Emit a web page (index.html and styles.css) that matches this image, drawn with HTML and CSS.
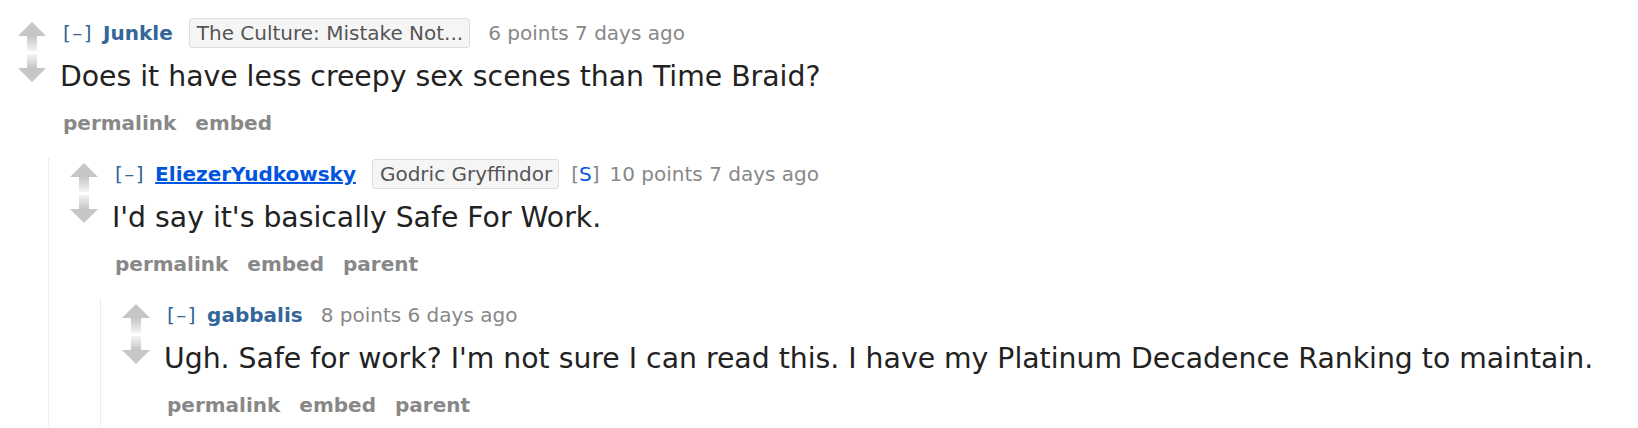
FILE: index.html
```html
<!DOCTYPE html>
<html>
<head>
<meta charset="utf-8">
<link rel="stylesheet" href="styles.css">
</head>
<body>
<div class="thread">
  <div class="comment top">
    <div class="row">
      <div class="midcol">
        <svg class="arrows" width="28" height="62" viewBox="0 0 28 62">
          <defs>
            <linearGradient id="fu" x1="0" y1="0" x2="0" y2="1">
              <stop offset="0" stop-color="#c6c6c6"/>
              <stop offset="1" stop-color="#c6c6c6" stop-opacity="0.2"/>
            </linearGradient>
            <linearGradient id="fd" x1="0" y1="1" x2="0" y2="0">
              <stop offset="0" stop-color="#c6c6c6"/>
              <stop offset="1" stop-color="#c6c6c6" stop-opacity="0.2"/>
            </linearGradient>
          </defs>
          <polygon points="14,0 28,14 0,14" fill="#c6c6c6"/>
          <rect x="9" y="14" width="10" height="15" fill="url(#fu)"/>
          <rect x="9" y="32" width="10" height="14" fill="url(#fd)"/>
          <polygon points="0,46 28,46 14,60" fill="#c6c6c6"/>
        </svg>
      </div>
      <div class="entry">
        <p class="tagline"><span class="expand">[–]</span><a class="author">Junkle</a><span class="flair">The Culture: Mistake Not...</span><span class="score">6 points 7 days ago</span></p>
        <div class="usertext">Does it have less creepy sex scenes than Time Braid?</div>
        <ul class="buttons"><li>permalink</li><li>embed</li></ul>
      </div>
    </div>
    <div class="child">
      <div class="comment">
        <div class="row">
          <div class="midcol">
            <svg class="arrows" width="28" height="62" viewBox="0 0 28 62">
              <polygon points="14,0 28,14 0,14" fill="#c6c6c6"/>
              <rect x="9" y="14" width="10" height="15" fill="url(#fu)"/>
              <rect x="9" y="32" width="10" height="14" fill="url(#fd)"/>
              <polygon points="0,46 28,46 14,60" fill="#c6c6c6"/>
            </svg>
          </div>
          <div class="entry">
            <p class="tagline"><span class="expand">[–]</span><a class="author submitter">EliezerYudkowsky</a><span class="flair">Godric Gryffindor</span><span class="userattrs">[<a class="s">S</a>]</span><span class="score">10 points 7 days ago</span></p>
            <div class="usertext">I'd say it's basically Safe For Work.</div>
            <ul class="buttons"><li>permalink</li><li>embed</li><li>parent</li></ul>
          </div>
        </div>
        <div class="child">
          <div class="comment last">
            <div class="row">
              <div class="midcol">
                <svg class="arrows" width="28" height="62" viewBox="0 0 28 62">
                  <polygon points="14,0 28,14 0,14" fill="#c6c6c6"/>
                  <rect x="9" y="14" width="10" height="15" fill="url(#fu)"/>
                  <rect x="9" y="32" width="10" height="14" fill="url(#fd)"/>
                  <polygon points="0,46 28,46 14,60" fill="#c6c6c6"/>
                </svg>
              </div>
              <div class="entry">
                <p class="tagline"><span class="expand">[–]</span><a class="author">gabbalis</a><span class="score">8 points 6 days ago</span></p>
                <div class="usertext">Ugh. Safe for work? I'm not sure I can read this. I have my Platinum Decadence Ranking to maintain.</div>
                <ul class="buttons"><li>permalink</li><li>embed</li><li>parent</li></ul>
              </div>
            </div>
          </div>
        </div>
      </div>
    </div>
  </div>
</div>
</body>
</html>
```

FILE: styles.css
```css
html, body {
  margin: 0;
  padding: 0;
  background: #ffffff;
}

body {
  font-family: "DejaVu Sans", Verdana, sans-serif;
  color: #222222;
  height: 428px;
  overflow: hidden;
}

.thread {
  padding-top: 18px;
}

.comment.top {
  padding-left: 18px;
}

.comment.last {
  padding-bottom: 6px;
}

.row {
  display: flex;
  align-items: flex-start;
}

.midcol {
  width: 42px;
  flex: none;
  padding-top: 4px;
}

.arrows {
  display: block;
}

.entry {
  flex: 1;
  min-width: 0;
}

.tagline {
  margin: 0;
  padding-left: 3px;
  font-size: 20px;
  line-height: 30px;
  height: 30px;
  white-space: nowrap;
  color: #888888;
}

.expand {
  color: #336699;
  letter-spacing: 1.5px;
  margin-right: 10px;
}

.author {
  color: #336699;
  font-weight: bold;
}

.author.submitter {
  color: #0055df;
  text-decoration: underline;
}

.flair {
  display: inline-block;
  margin-left: 16px;
  padding: 0 6px 0 7px;
  line-height: 28px;
  border: 1px solid #dddddd;
  border-radius: 3px;
  background: #f5f5f5;
  color: #555555;
}

.userattrs {
  margin-left: 12px;
  color: #888888;
}

.userattrs .s {
  color: #0055df;
}

.score {
  margin-left: 18px;
}

.userattrs + .score {
  margin-left: 10px;
}

.usertext {
  margin-top: 9px;
  font-size: 28.3px;
  line-height: 40px;
  color: #222222;
  white-space: nowrap;
}

.buttons {
  list-style: none;
  margin: 11px 0 0 0;
  padding: 0 0 0 3px;
  display: flex;
  gap: 19px;
  font-size: 20px;
  line-height: 30px;
  font-weight: bold;
  color: #888888;
}

.child {
  margin-top: 21px;
  margin-left: 30px;
  padding-left: 21px;
  border-left: 1px dotted #d6d6fa;
}
```
